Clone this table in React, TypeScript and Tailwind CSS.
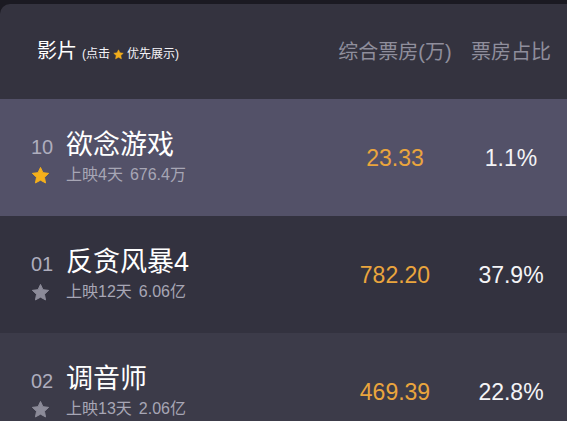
import React from "react";

const FONT = { fontFamily: '"Liberation Sans", "Noto Sans CJK SC", sans-serif' };

function Star({ className, size }: { className: string; size: number }) {
  return (
    <svg width={size} height={size} viewBox="0 0 24 24" className={className}>
      <path
        d="M12 1.8l3.1 6.6 7.2.9-5.3 5 1.4 7.1L12 17.9l-6.4 3.5L7 14.3l-5.3-5 7.2-.9z"
        fill="currentColor"
        stroke="currentColor"
        strokeWidth="1.2"
        strokeLinejoin="round"
      />
    </svg>
  );
}

type Row = {
  rank: string;
  title: string;
  days: string;
  total: string;
  amount: string;
  pct: string;
  bg: string;
  active: boolean;
};

const rows: Row[] = [
  { rank: "10", title: "欲念游戏", days: "上映4天", total: "676.4万", amount: "23.33", pct: "1.1%", bg: "bg-[#535168]", active: true },
  { rank: "01", title: "反贪风暴4", days: "上映12天", total: "6.06亿", amount: "782.20", pct: "37.9%", bg: "bg-[#33323f]", active: false },
  { rank: "02", title: "调音师", days: "上映13天", total: "2.06亿", amount: "469.39", pct: "22.8%", bg: "bg-[#3c3b49]", active: false },
];

export default function App() {
  return (
    <div className="w-[567px] h-[421px] overflow-hidden bg-[#1b1a22] pt-[4px]" style={FONT}>
      <div className="rounded-tl-[10px] bg-[#34333f] h-[95px] flex items-center pb-[2px]">
        <div className="flex-1 pl-[37px] flex items-baseline text-white">
          <span className="text-[20px] leading-[28px]">影片</span>
          <span className="ml-[5px] text-[12px] leading-[16px] flex items-center text-[#f4f4f8]">
            (点击
            <Star className="text-[#f1ad1c] mx-[3px] mt-[2px]" size={11} />
            优先展示)
          </span>
        </div>
        <div className="w-[120px] text-center text-[20px] text-[#8f8e9c] leading-[28px] mt-[2px]">综合票房(万)</div>
        <div className="w-[112px] text-center text-[20px] text-[#8f8e9c] leading-[28px] mt-[2px]">票房占比</div>
      </div>
      {rows.map((r) => (
        <div key={r.rank} className={`${r.bg} h-[117px] flex items-center`}>
          <div className="flex-1 pl-[31px]">
            <div className="flex items-baseline">
              <span className="w-[35px] text-[20px] text-[#aeadbd] leading-[30px]">{r.rank}</span>
              <span className="text-[27px] text-white leading-[30px]">{r.title}</span>
            </div>
            <div className="flex items-center mt-[3px]">
              <span className="w-[35px] flex">
                <Star className={r.active ? "text-[#f5b01b]" : "text-[#8c8b99]"} size={19} />
              </span>
              <span className="text-[16px] leading-[20px] text-[#a7a6b5]">
                {r.days}
                <span className="ml-[7px]">{r.total}</span>
              </span>
            </div>
          </div>
          <div className="w-[120px] text-center text-[23px] text-[#eaa53d] leading-[30px]">{r.amount}</div>
          <div className="w-[112px] text-center text-[23px] text-[#f4f4f6] leading-[30px]">{r.pct}</div>
        </div>
      ))}
    </div>
  );
}
